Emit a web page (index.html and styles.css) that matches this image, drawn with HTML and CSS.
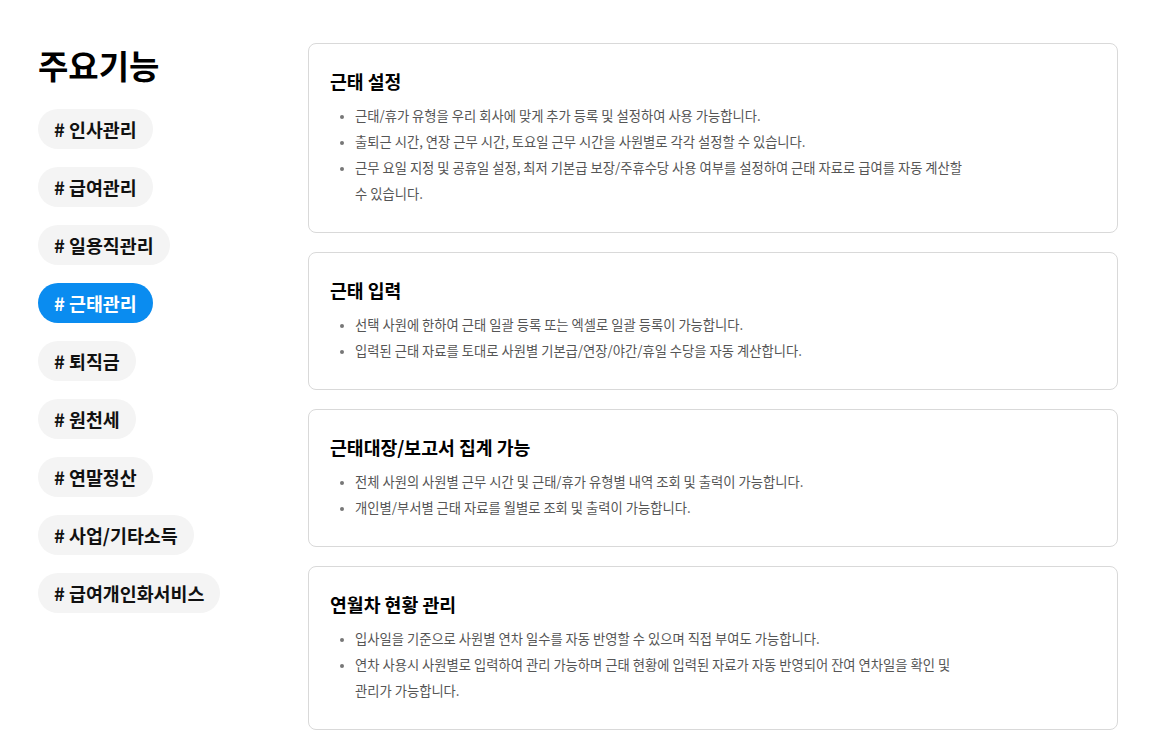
FILE: index.html
```html
<html>
<head>
<title>주요기능</title>
<link rel="stylesheet" href="styles.css">
</head>
<body>

<div class="page">

  <div class="side">
    <h2 class="side-title">주요기능</h2>
    <div class="tags">
      <a class="tag" href="#">#&nbsp;인사관리</a>
      <a class="tag" href="#">#&nbsp;급여관리</a>
      <a class="tag" href="#">#&nbsp;일용직관리</a>
      <a class="tag active" href="#">#&nbsp;근태관리</a>
      <a class="tag" href="#">#&nbsp;퇴직금</a>
      <a class="tag" href="#">#&nbsp;원천세</a>
      <a class="tag" href="#">#&nbsp;연말정산</a>
      <a class="tag" href="#">#&nbsp;사업/기타소득</a>
      <a class="tag" href="#">#&nbsp;급여개인화서비스</a>
    </div>
  </div>

  <div class="cards">
    <div class="card">
      <h3>근태 설정</h3>
      <ul>
        <li>근태/휴가 유형을 우리 회사에 맞게 추가 등록 및 설정하여 사용 가능합니다.</li>
        <li>출퇴근 시간, 연장 근무 시간, 토요일 근무 시간을 사원별로 각각 설정할 수 있습니다.</li>
        <li>근무 요일 지정 및 공휴일 설정, 최저 기본급 보장/주휴수당 사용 여부를 설정하여 근태 자료로 급여를 자동 계산할 수 있습니다.</li>
      </ul>
    </div>

    <div class="card">
      <h3>근태 입력</h3>
      <ul>
        <li>선택 사원에 한하여 근태 일괄 등록 또는 엑셀로 일괄 등록이 가능합니다.</li>
        <li>입력된 근태 자료를 토대로 사원별 기본급/연장/야간/휴일 수당을 자동 계산합니다.</li>
      </ul>
    </div>

    <div class="card">
      <h3>근태대장/보고서 집계 가능</h3>
      <ul>
        <li>전체 사원의 사원별 근무 시간 및 근태/휴가 유형별 내역 조회 및 출력이 가능합니다.</li>
        <li>개인별/부서별 근태 자료를 월별로 조회 및 출력이 가능합니다.</li>
      </ul>
    </div>

    <div class="card">
      <h3>연월차 현황 관리</h3>
      <ul>
        <li>입사일을 기준으로 사원별 연차 일수를 자동 반영할 수 있으며 직접 부여도 가능합니다.</li>
        <li>연차 사용시 사원별로 입력하여 관리 가능하며 근태 현황에 입력된 자료가 자동 반영되어 잔여 연차일을 확인 및 관리가 가능합니다.</li>
      </ul>
    </div>
  </div>

</div>

</body>
</html>
```

FILE: styles.css
```css
body {
  margin: 0;
  background: #fff;
  color: #111;
  font-family: "Noto Sans CJK KR", "Noto Sans", sans-serif;
  word-break: keep-all;
}

.page {
  display: flex;
  padding: 43px 0 0 38px;
}

.side {
  width: 270px;
  flex-shrink: 0;
}

.side-title {
  margin: 0 0 21px;
  font-size: 33px;
  line-height: 45px;
  font-weight: 700;
  color: #000;
}

.tags {
  display: flex;
  flex-direction: column;
  align-items: flex-start;
  gap: 18px;
}

.tag {
  display: block;
  padding: 8px 16px;
  border-radius: 20px;
  background: #f4f4f4;
  color: #111;
  text-decoration: none;
  font-size: 18.4px;
  line-height: 24px;
  font-weight: 700;
}

.tag.active {
  background: #0a8cf0;
  color: #fff;
}

.cards {
  width: 810px;
  display: flex;
  flex-direction: column;
  gap: 19px;
}

.card {
  border: 1px solid #d9d9d9;
  border-radius: 8px;
  padding: 23px 21px 25px;
}

.card h3 {
  margin: 0 0 8px;
  font-size: 18.3px;
  line-height: 28px;
  font-weight: 700;
  color: #000;
}

.card ul {
  margin: 0;
  padding-left: 25px;
  max-width: 614px;
  color: #555;
}

.card li {
  font-size: 13.3px;
  line-height: 26px;
}

.card li::marker {
  color: #777;
  font-size: 11px;
}
```
